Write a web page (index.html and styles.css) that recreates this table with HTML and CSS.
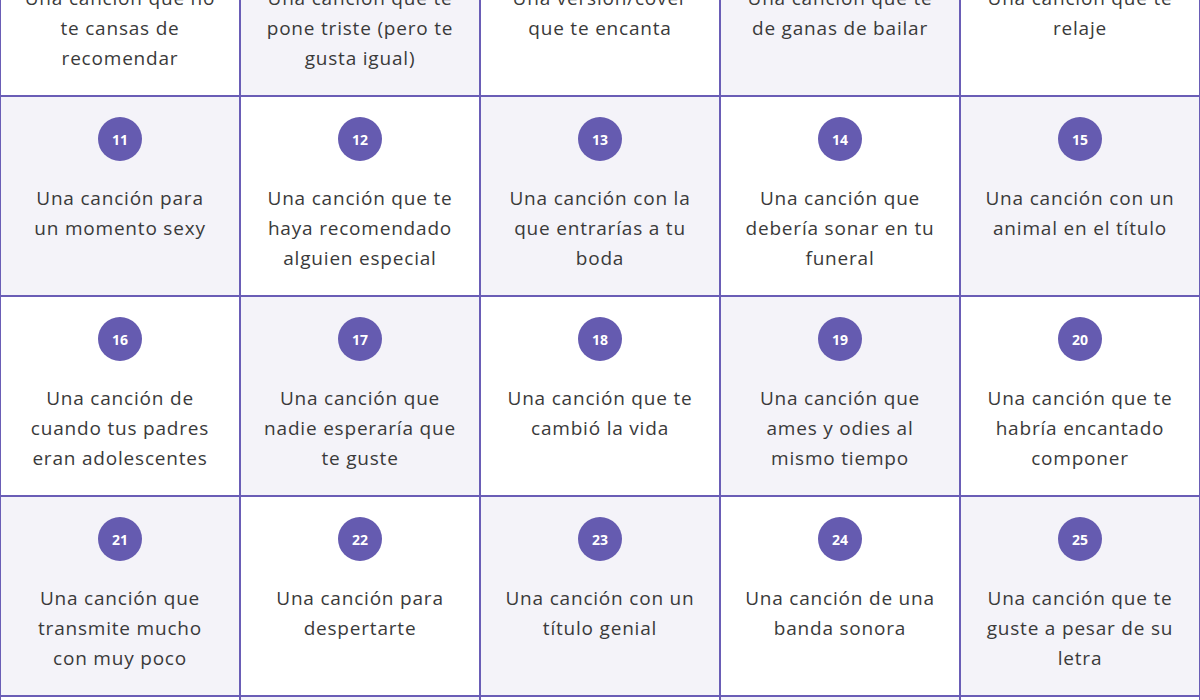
FILE: index.html
```html
<!DOCTYPE html>
<html lang="es">
<head>
<meta charset="utf-8">
<title>Bingo musical</title>
<link rel="stylesheet" href="styles.css">
</head>
<body>
<main class="board">
  <div class="cell"><span class="num">6</span><p class="txt">Una canción que no te cansas de recomendar</p></div>
  <div class="cell alt"><span class="num">7</span><p class="txt">Una canción que te pone triste (pero te gusta igual)</p></div>
  <div class="cell"><span class="num">8</span><p class="txt">Una versión/cover que te encanta</p></div>
  <div class="cell alt"><span class="num">9</span><p class="txt">Una canción que te de ganas de bailar</p></div>
  <div class="cell"><span class="num">10</span><p class="txt">Una canción que te relaje</p></div>

  <div class="cell alt"><span class="num">11</span><p class="txt">Una canción para un momento sexy</p></div>
  <div class="cell"><span class="num">12</span><p class="txt">Una canción que te haya recomendado alguien especial</p></div>
  <div class="cell alt"><span class="num">13</span><p class="txt">Una canción con la que entrarías a tu boda</p></div>
  <div class="cell"><span class="num">14</span><p class="txt">Una canción que debería sonar en tu funeral</p></div>
  <div class="cell alt"><span class="num">15</span><p class="txt">Una canción con un animal en el título</p></div>

  <div class="cell"><span class="num">16</span><p class="txt">Una canción de cuando tus padres eran adolescentes</p></div>
  <div class="cell alt"><span class="num">17</span><p class="txt">Una canción que nadie esperaría que te guste</p></div>
  <div class="cell"><span class="num">18</span><p class="txt">Una canción que te cambió la vida</p></div>
  <div class="cell alt"><span class="num">19</span><p class="txt">Una canción que ames y odies al mismo tiempo</p></div>
  <div class="cell"><span class="num">20</span><p class="txt">Una canción que te habría encantado componer</p></div>

  <div class="cell alt"><span class="num">21</span><p class="txt">Una canción que transmite mucho con muy poco</p></div>
  <div class="cell"><span class="num">22</span><p class="txt">Una canción para despertarte</p></div>
  <div class="cell alt"><span class="num">23</span><p class="txt">Una canción con un título genial</p></div>
  <div class="cell"><span class="num">24</span><p class="txt">Una canción de una banda sonora</p></div>
  <div class="cell alt"><span class="num">25</span><p class="txt">Una canción que te guste a pesar de su letra</p></div>

  <div class="cell"><span class="num">26</span><p class="txt">Una canción para un viaje en coche</p></div>
  <div class="cell alt"><span class="num">27</span><p class="txt">Una canción que te recuerde a un lugar</p></div>
  <div class="cell"><span class="num">28</span><p class="txt">Una canción de tu artista favorito</p></div>
  <div class="cell alt"><span class="num">29</span><p class="txt">Una canción que sepas de memoria</p></div>
  <div class="cell"><span class="num">30</span><p class="txt">Una canción para cerrar la noche</p></div>
</main>
</body>
</html>
```

FILE: styles.css
```css
html, body {
  margin: 0;
  padding: 0;
  background: #ffffff;
}

body {
  font-family: "Open Sans", "Noto Sans", "Liberation Sans", sans-serif;
  color: #3a3a3a;
}

.board {
  display: grid;
  grid-template-columns: repeat(5, 240px);
  grid-auto-rows: 200px;
  margin-top: -104px;
}

.cell {
  box-sizing: border-box;
  border: 1px solid #6a5db6;
  background: #ffffff;
  display: flex;
  flex-direction: column;
  align-items: center;
  padding: 20px 21px 0;
}

.cell.alt {
  background: #f4f3f9;
}

.num {
  width: 44px;
  height: 44px;
  border-radius: 50%;
  background: #655bb0;
  color: #ffffff;
  font-size: 14px;
  font-weight: 700;
  display: flex;
  align-items: center;
  justify-content: center;
  flex: none;
}

.txt {
  margin: 22px 0 0;
  font-size: 19px;
  line-height: 30px;
  letter-spacing: 0.8px;
  text-align: center;
}
```
